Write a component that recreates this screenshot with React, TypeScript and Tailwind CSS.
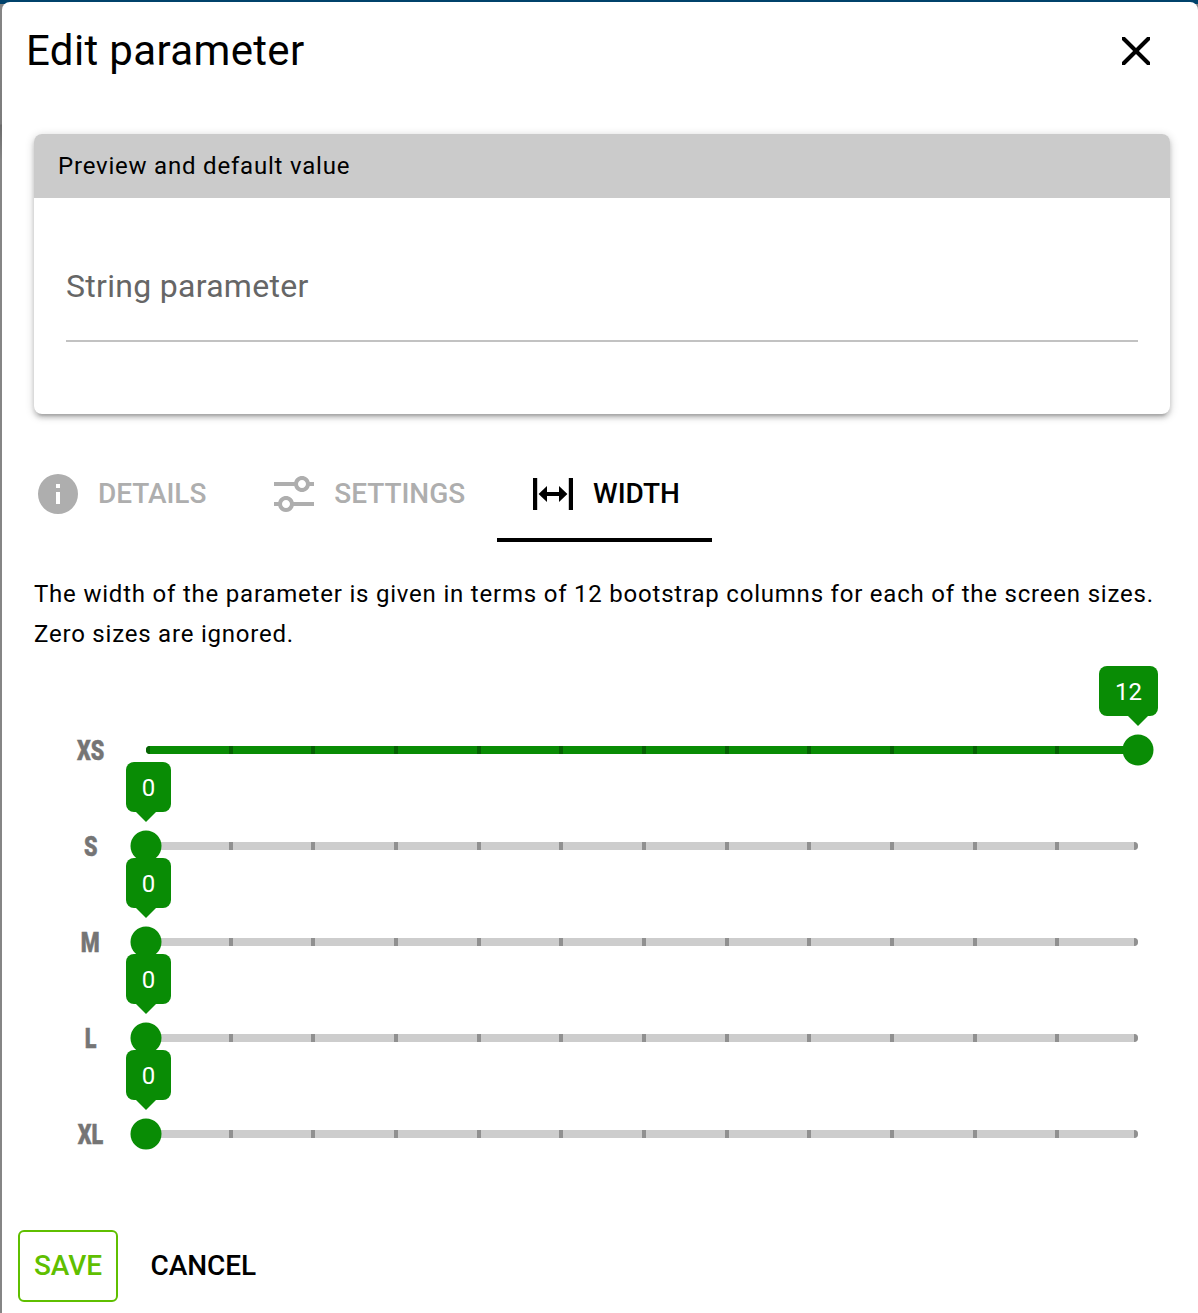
import React from "react";

const SIZES = [
  { label: "XS", value: 12 },
  { label: "S", value: 0 },
  { label: "M", value: 0 },
  { label: "L", value: 0 },
  { label: "XL", value: 0 },
];

const ICONS = {
  close:
    "M13.46,12L19,17.54V19H17.54L12,13.46L6.46,19H5V17.54L10.54,12L5,6.46V5H6.46L12,10.54L17.54,5H19V6.46L13.46,12Z",
  info: "M13,9H11V7H13M13,17H11V11H13M12,2A10,10 0 0,0 2,12A10,10 0 0,0 12,22A10,10 0 0,0 22,12A10,10 0 0,0 12,2Z",
  tune: "M8 13C6.14 13 4.59 14.28 4.14 16H2V18H4.14C4.59 19.72 6.14 21 8 21S11.41 19.72 11.86 18H22V16H11.86C11.41 14.28 9.86 13 8 13M8 19C6.9 19 6 18.1 6 17S6.9 15 8 15 10 15.9 10 17 9.1 19 8 19M19.86 6C19.41 4.28 17.86 3 16 3S12.59 4.28 12.14 6H2V8H12.14C12.59 9.72 14.14 11 16 11S19.41 9.72 19.86 8H22V6H19.86M16 9C14.9 9 14 8.1 14 7S14.9 5 16 5 18 5.9 18 7 17.1 9 16 9Z",
  width: "M9,11H15V8L19.2,12L15,16V13H9V16L4.8,12L9,8V11M2,20V4H4.1V20H2M19.9,20V4H22V20H19.9Z",
};

function Icon({ d }: { d: string }) {
  return (
    <svg viewBox="0 0 24 24" className="size-12 shrink-0 fill-current">
      <path d={d} />
    </svg>
  );
}

function Tab({ icon, label, active }: { icon: string; label: string; active?: boolean }) {
  return (
    <div
      className={
        active
          ? "flex h-24 items-center gap-4 border-b-4 border-black px-8 pt-1 text-black"
          : "flex h-24 items-center gap-4 border-b-4 border-transparent px-8 pt-1 text-[#aeaeae]"
      }
    >
      <Icon d={icon} />
      <span className="text-[28px] leading-12 font-medium tracking-[-0.06px]">{label}</span>
    </div>
  );
}

function Slider({ label, value }: { label: string; value: number }) {
  const full = value === 12;
  return (
    <div className="flex h-24 items-center">
      <div className="flex w-28 justify-center pt-0.5 pl-px">
        <span className="origin-center scale-x-[0.77] text-[28px] leading-none font-black text-[#757575] [-webkit-text-stroke:0.5px_#757575]">
          {label}
        </span>
      </div>
      <div className="relative h-2 w-[992px]">
        <div
          className={
            full
              ? "flex h-2 overflow-hidden rounded-full bg-[#098c05] text-[#066203]"
              : "flex h-2 overflow-hidden rounded-full bg-[#cdcdcd] text-[#909090]"
          }
        >
          {Array.from({ length: 12 }, (_, i) => (
            <div key={i} className="flex flex-1 justify-between">
              <i className="block w-1 bg-current" />
              {i === 11 && <i className="block w-1 bg-current" />}
            </div>
          ))}
        </div>
        <div className="absolute top-1 size-0" style={{ left: `${(value / 12) * 100}%` }}>
          <svg viewBox="0 0 32 32" className="absolute -top-4 -left-4 size-8 max-w-none fill-[#098c05]">
            <circle cx="16" cy="16" r="15.5" />
          </svg>
          <div className="absolute -top-[34px] -left-2.5 border-x-[10px] border-t-[10px] border-x-transparent border-t-[#098c05]" />
          <div
            className={
              full
                ? "absolute -top-[84px] right-[-20px] flex h-[50px] w-[59px] items-center justify-center rounded-lg bg-[#098c05] pt-0.5 text-2xl text-white"
                : "absolute -top-[84px] -left-5 flex h-[50px] w-[45px] items-center justify-center rounded-lg bg-[#098c05] pt-0.5 text-2xl text-white"
            }
          >
            {value}
          </div>
        </div>
      </div>
    </div>
  );
}

export default function App() {
  return (
    <div className="h-[1313px] overflow-hidden bg-[linear-gradient(#00426b_4px,#858585_4px,#7c7c7c_124px,#6c6c6c_125px,#858585_160px)] pt-0.5 pl-0.5 font-[Roboto,sans-serif] text-black">
      <div className="flex h-full flex-col rounded-t-lg bg-white">
        <header className="flex h-[98px] items-center justify-between pr-[38px] pl-6">
          <h1 className="text-[42px] leading-none tracking-[0.0085em]">Edit parameter</h1>
          <button aria-label="Close">
            <Icon d={ICONS.close} />
          </button>
        </header>
        <section className="mt-[34px] ml-8 h-[280px] w-[1136px] overflow-hidden rounded-lg shadow-[0_2px_10px_rgba(0,0,0,0.2),0_4px_4px_rgba(0,0,0,0.14),0_6px_2px_-4px_rgba(0,0,0,0.12)]">
          <div className="flex h-16 items-center bg-[#cbcbcb] pl-6 text-2xl tracking-[0.79px]">
            Preview and default value
          </div>
          <div className="mx-8 mt-8 flex h-28 items-center border-b-2 border-[#c2c2c2] pt-0.5 text-[32px] tracking-[0.29px] text-[#666666]">
            String parameter
          </div>
        </section>
        <nav className="mt-8 flex">
          <Tab icon={ICONS.info} label="DETAILS" />
          <Tab icon={ICONS.tune} label="SETTINGS" />
          <Tab icon={ICONS.width} label="WIDTH" active />
        </nav>
        <p className="mt-8 ml-8 text-2xl leading-10 tracking-[0.79px]">
          The width of the parameter is given in terms of 12 bootstrap columns for each of the screen sizes.
          <br />
          Zero sizes are ignored.
        </p>
        <div className="mt-12 pl-8">
          {SIZES.map((s) => (
            <Slider key={s.label} {...s} />
          ))}
        </div>
        <footer className="mt-12 ml-4 flex items-center text-[28px] font-medium tracking-[-0.04px]">
          <button className="h-[72px] w-[100px] rounded-md border-2 border-[#5fbf00] text-[#5fbf00]">SAVE</button>
          <button className="ml-[32.5px]">CANCEL</button>
        </footer>
      </div>
    </div>
  );
}
